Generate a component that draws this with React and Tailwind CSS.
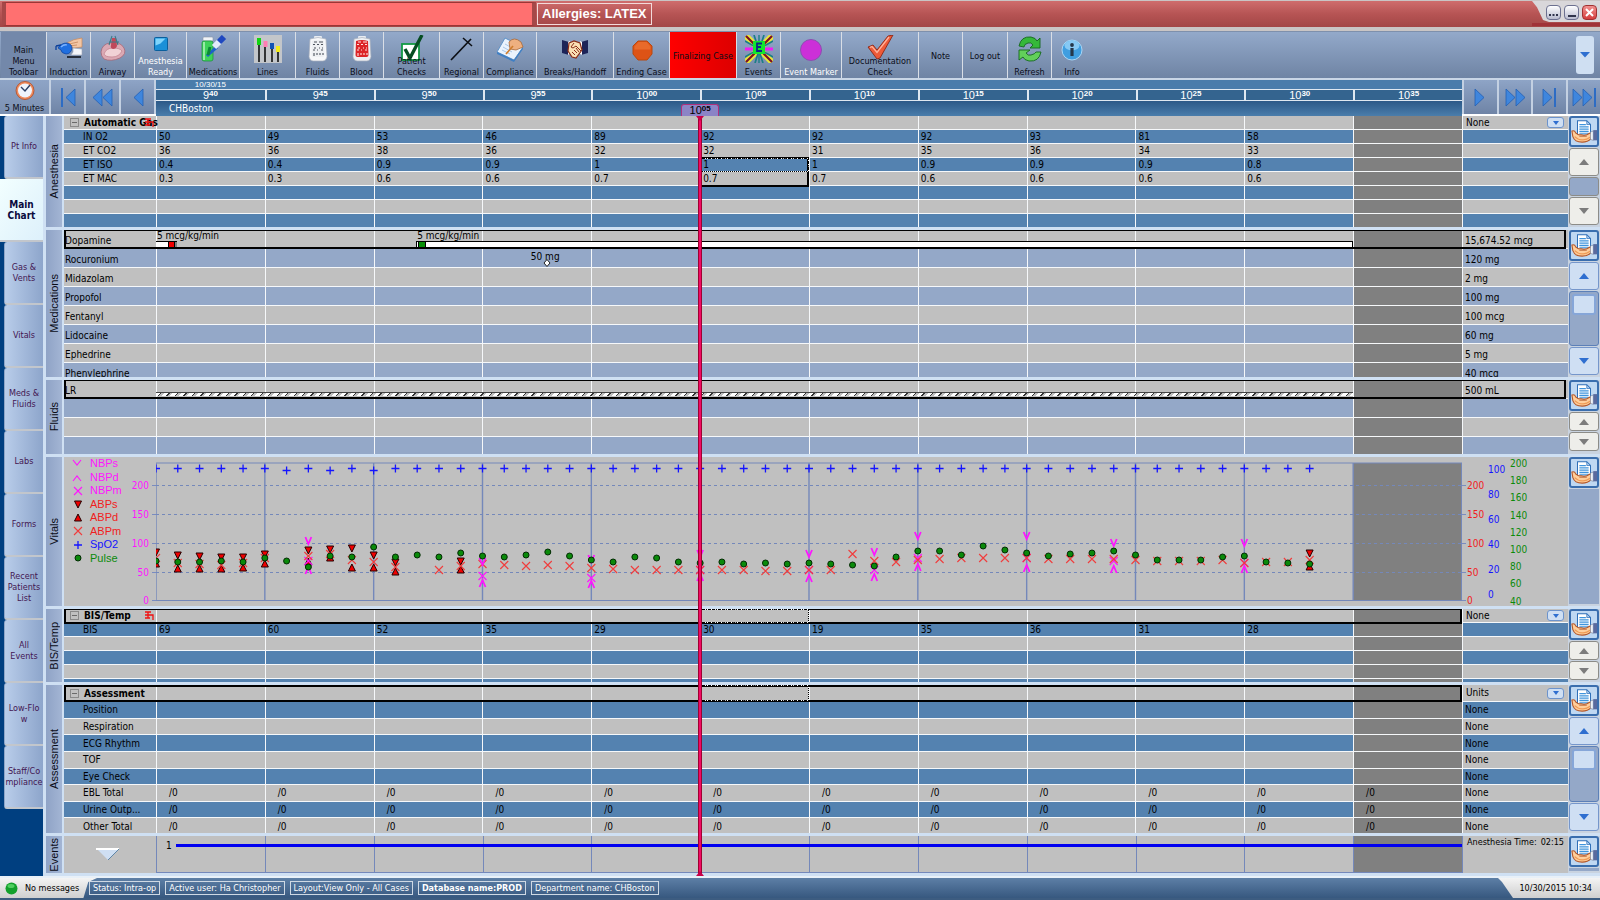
import React from "react";

const cond = "font-['DejaVu_Sans_Condensed','DejaVu_Sans',sans-serif]";

/* ---------- toolbar icons ---------- */
const Ico = ({ children, w = 28, h = 28 }) => (
  <svg width={w} height={h} viewBox="0 0 28 28" aria-hidden="true">{children}</svg>
);

const Bag = ({ body, edge, ink }) => (
  <Ico>
    <rect x="10" y="1" width="8" height="3" rx="1" fill="#e8ecf2" />
    <path d="M6 4q8-3 16 0l1 18q-1 4-4 4H9q-3 0-4-4z" fill={edge} stroke="#a8afbc" strokeWidth=".7" />
    <path d="M8 6q6-2 12 0l.5 14q0 2-2 2H9.5q-2 0-2-2z" fill={body} />
    <path d="M10 7h3M15 7h4M9 9.500h2M13 9.500h2M17 9.500h2M10 13h2M15 13h1M18 13h1M9 15h2M13 15h1M17 15h2M10 18v3M13 18v2M16 18v2M19 18v2" stroke={ink} strokeWidth="1.100" />
  </Ico>
);

const icons = {
  induction: (
    <Ico>
      <path d="M12 8q6-4 15-5v9l-8 1-7-1z" fill="#f3c6a4" stroke="#c4865c" strokeWidth=".7" />
      <path d="M14 9l9-2M14 11l8-1" stroke="#c4865c" strokeWidth=".8" />
      <path d="M3 13q3-5 9-5 5 1 5 5-1 6-6 6-5-1-5-4z" fill="#1f6fe0" stroke="#0b3f9a" strokeWidth=".7" />
      <path d="M6 12q3-3 6-2" stroke="#7db4ff" fill="none" strokeWidth="1.300" />
      <path d="M1 11v4M1 11l5-1" stroke="#0b3f9a" strokeWidth="1.300" />
      <path d="M18 13l9 1v6H16l2-3z" fill="#f4f6fa" stroke="#9aa3b2" strokeWidth=".6" />
      <path d="M12 22h14" stroke="#10151d" strokeWidth="1.600" />
    </Ico>
  ),
  airway: (
    <Ico>
      <path d="M2 17q1-8 9-9 10-2 14 5 3 6-4 10-9 4-16 1-3-3-3-7z" fill="#dba9b4" stroke="#a66877" strokeWidth=".8" />
      <path d="M5 19q2-6 9-6 7 0 9 3-3 6-10 6-7 0-8-3z" fill="#f1d2d6" stroke="#c58592" strokeWidth=".8" />
      <path d="M13 3h4l1 8q-1 3-4 3-3-1-2-4z" fill="#c0485a" />
      <path d="M10 7h10M13 1l-3 9M16 1l3 9" stroke="#3e7b86" strokeWidth="1.100" />
    </Ico>
  ),
  ready: (
    <svg width="14" height="14" viewBox="0 0 14 14" aria-hidden="true" className="mt-[2px]">
      <rect x=".5" y=".5" width="13" height="13" rx="1" fill="#1a90d8" stroke="#0a5f9c" />
      <path d="M1.500 1.500h10l-5 5-5 2z" fill="#7fd4fb" />
    </svg>
  ),
  meds: (
    <Ico>
      <rect x="4" y="2" width="10" height="4" rx="1" fill="#f0f3f7" stroke="#8b96a6" strokeWidth=".6" />
      <rect x="3" y="6" width="11" height="20" rx="2" fill="#3fd25a" stroke="#1f9440" strokeWidth=".8" />
      <path d="M5 7v18" stroke="#b6f5c0" strokeWidth="1.500" />
      <path d="M8 21l3-3 7-6" stroke="#1c62c8" strokeWidth="3" />
      <path d="M9 20l2-8" stroke="#0a8a34" strokeWidth="3" />
      <path d="M15 12l6-6" stroke="#e2ecfb" strokeWidth="6" />
      <path d="M20 7l5-5" stroke="#1f48c0" strokeWidth="6" />
    </Ico>
  ),
  lines: (
    <Ico>
      <rect width="28" height="28" fill="#c3c6ca" />
      <path d="M5 9v18M11 11v16M18 14v13M24 16v11" stroke="#111" strokeWidth="1.600" />
      <path d="M3 3h4v7H3z" fill="#12d412" /><path d="M9.500 6h4v6h-4z" fill="#ff7eb2" />
      <path d="M16 8h4v6h-4z" fill="#1253b4" /><path d="M22 11h4v6h-4z" fill="#f4ec1c" />
    </Ico>
  ),
  fluids: <Bag body="#eef0f3" edge="#f7f8fa" ink="#4c525c" />,
  blood: <Bag body="#dc2428" edge="#eef0f4" ink="#ffe3e0" />,
  checks: (
    <Ico>
      <rect x="4" y="9" width="17" height="16" fill="#fff" stroke="#129a44" strokeWidth="1.800" />
      <path d="M7 14l5 9L24 0" fill="none" stroke="#064d22" strokeWidth="3.400" />
    </Ico>
  ),
  regional: (
    <Ico>
      <path d="M3 25L23 4" stroke="#0c0f14" strokeWidth="1.700" />
      <path d="M15 3l9 8" stroke="#0c0f14" strokeWidth="1.500" />
    </Ico>
  ),
  compliance: (
    <Ico>
      <path d="M9 3l18 9-9 13L1 17z" fill="#eaf3fd" stroke="#5f93c9" />
      <path d="M1 17l17 8 9-13v2l-9 13L1 19z" fill="#3f7fc4" />
      <path d="M9 9l9 5M7 12l9 5M6 15l8 4" stroke="#a9c6e6" />
      <path d="M13 7q5-6 12 0l2 5-7 3-6-1z" fill="#eeb080" stroke="#a8693a" strokeWidth=".8" />
      <path d="M10 19l7-8" stroke="#d07d2c" strokeWidth="1.600" />
    </Ico>
  ),
  breaks: (
    <Ico>
      <path d="M1 5l7 2v13l-7-2zM27 5l-7 2v13l7-2z" fill="#1d2458" />
      <path d="M7 7l2-1v13l-2 1zM19 6l2 1v13l-2-1z" fill="#fff" />
      <path d="M8 8l5-2 6 2 2 7-6 8-4-1-4-6z" fill="#f9dfb4" stroke="#8a2d18" strokeWidth="1.200" />
      <path d="M13 8l-3 4 2 1 3-2 5 5M11 17l3 3M13 15l3 3M15 13l3 4" stroke="#8a2d18" fill="none" />
    </Ico>
  ),
  ending: (
    <Ico>
      <path d="M10 6h9l5 5v8l-5 6h-9l-5-6v-8z" fill="#dd5316" stroke="#b8480f" />
      <path d="M10.500 7h8l4 4.500v3H6.500v-3z" fill="#e96a2a" />
    </Ico>
  ),
  events: (
    <Ico>
      <path d="M1 1l26 26M27 1L1 27" stroke="#e9e83a" strokeWidth="6" />
      <path d="M1 1l26 26M27 1L1 27" stroke="#7b0f24" strokeWidth="2.200" />
      <path d="M0 6l28 16M28 6L0 22M9 0l9 28M19 0L10 28" stroke="#1b7f86" strokeWidth="1.700" />
      <path d="M14 0v28" stroke="#1b7f86" strokeWidth="1.400" />
      <path d="M0 14h28" stroke="#f01ff0" strokeWidth="3" />
      <path d="M8 6h12v13H8z" fill="#12e82c" />
      <path d="M17 8.500h-5v7.500h5M12 12h4" stroke="#0d2a86" strokeWidth="1.800" fill="none" />
    </Ico>
  ),
  marker: <Ico><circle cx="14" cy="15" r="10.500" fill="#cc30d8" stroke="#8d4fb0" /></Ico>,
  doc: (
    <Ico>
      <path d="M2 12l5-2 4 5L22 1l5-1-13 23-3 1z" fill="#ee5a38" stroke="#8c2614" strokeWidth=".9" />
      <path d="M4 12.500l2-1 5 6L23 2" stroke="#ffb49c" fill="none" strokeWidth="1.300" />
    </Ico>
  ),
  refresh: (
    <Ico>
      <path d="M3 11Q5 1 15 2q5 1 6 4l3-3v10H14l3-3q-2-3-5-2-4 1-4 4z" fill="#35b83a" stroke="#14681d" strokeWidth=".9" />
      <path d="M25 17q-2 10-12 9-5-1-6-4l-4 3V15h11l-4 3q2 3 5 2 4-1 5-3z" fill="#62cf5a" stroke="#14681d" strokeWidth=".9" />
    </Ico>
  ),
  info: (
    <Ico>
      <circle cx="14" cy="15" r="10" fill="#3f9ee0" stroke="#a8d6f5" />
      <ellipse cx="14" cy="10.500" rx="7.500" ry="5" fill="#86c9f4" />
      <circle cx="14" cy="10" r="1.900" fill="#24374a" />
      <path d="M14 13v8" stroke="#24374a" strokeWidth="3.200" />
    </Ico>
  ),
};

const tools = [
  ["w-[46px] bg-[#7388aa]", null, ["Main", "Menu", "Toolbar"]],
  ["w-[44px]", "induction", ["Induction"]],
  ["w-[44px]", "airway", ["Airway"]],
  ["w-[52px] text-white", "ready", ["Anesthesia", "Ready"]],
  ["w-[53px]", "meds", ["Medications"]],
  ["w-[56px]", "lines", ["Lines"]],
  ["w-[44px]", "fluids", ["Fluids"]],
  ["w-[44px]", "blood", ["Blood"]],
  ["w-[56px]", "checks", ["Patient", "Checks"]],
  ["w-[44px]", "regional", ["Regional"]],
  ["w-[53px]", "compliance", ["Compliance"]],
  ["w-[77px]", "breaks", ["Breaks/Handoff"]],
  ["w-[56px]", "ending", ["Ending Case"]],
  ["w-[67px] bg-linear-to-r from-[#ff0000] to-[#dd0000]", null, ["Finalizing Case"]],
  ["w-[44px]", "events", ["Events"]],
  ["w-[61px] text-white", "marker", ["Event Marker"]],
  ["w-[77px]", "doc", ["Documentation", "Check"]],
  ["w-[44px]", null, ["Note"]],
  ["w-[45px]", null, ["Log out"]],
  ["w-[44px]", "refresh", ["Refresh"]],
  ["w-[40px] border-r-0", "info", ["Info"]],
];

function TitleBar() {
  return (
    <header className="flex h-[31px] flex-col border-t border-b-2 border-[#c9c5c5] bg-[#c9c5c5]">
      <div className="flex h-[26px] bg-linear-to-b from-[#cf6d6d] via-[#b65454] to-[#a34646] pl-[2px]">
        <div className="my-px w-[534px] border-x-4 border-y border-[#a54848] border-y-[#9b3636] bg-[#ff7070]" />
        <h1 className="my-[2px] ml-px border border-[#f3dada] px-[4px] font-['Liberation_Sans',sans-serif] text-[13px] leading-[20px] font-bold text-white">
          Allergies: LATEX
        </h1>
        <div className="ml-auto flex w-[68px] flex-col">
          <div className="flex h-[21px] items-start justify-end gap-[3px] bg-[#d9d7da] pt-[4px] pr-[3px] [clip-path:polygon(0_0,100%_0,100%_100%,17px_100%,11px_90%,5px_30%)]">
            <button aria-label="More" className="flex h-[15px] w-[15px] items-end justify-center rounded-sm border border-[#6c7090] bg-linear-to-b from-white to-[#b9bcd0] pb-[3px]">
              <svg width="9" height="2"><path d="M0 0h2v2H0zM3.500 0h2v2h-2zM7 0h2v2H7z" fill="#30344c" /></svg>
            </button>
            <button aria-label="Minimize" className="flex h-[15px] w-[15px] items-end justify-center rounded-sm border border-[#6c7090] bg-linear-to-b from-white to-[#b9bcd0] pb-[2px]">
              <span className="h-[2px] w-[8px] bg-[#30344c]" />
            </button>
            <button aria-label="Close" className="flex h-[15px] w-[15px] items-center justify-center rounded-sm border border-[#a03030] bg-linear-to-b from-[#f09090] to-[#d43c3c]">
              <svg width="9" height="9"><path d="M1 1l7 7M8 1L1 8" stroke="#fff" strokeWidth="2" /></svg>
            </button>
          </div>
          <div className="mt-px h-[3px] bg-[#a03238]" />
        </div>
      </div>
    </header>
  );
}

function Toolbar() {
  return (
    <nav aria-label="Main toolbar" className={`flex h-[47px] border-t border-[#7e90ac] bg-linear-to-b from-[#93a9ca] to-[#6f84a4] pl-px text-[9px] leading-[11px] text-[#0b0d18] ${cond}`}>
      {tools.map(([cls, icon, lines]) => (
        <button key={lines[0]} className={`grid h-full shrink-0 grid-cols-1 justify-items-center border-r border-[#d9dee6] pt-[3px] whitespace-nowrap ${cls}`}>
          {icon && <span className="col-start-1 row-start-1 self-start">{icons[icon]}</span>}
          <span className={`col-start-1 row-start-1 ${icon || lines.length > 1 ? "self-end" : "self-center"}`}>
            {lines.map((l) => <span key={l} className="block">{l}</span>)}
          </span>
        </button>
      ))}
      <button aria-label="More tools" className="my-[4px] mr-[6px] ml-auto flex w-[18px] items-center justify-center rounded-[3px] bg-[#cfdff2]">
        <svg width="10" height="6"><path d="M0 0h10L5 5.500z" fill="#2f6fd0" /></svg>
      </button>
    </nav>
  );
}

/* ---------- time navigation ---------- */
const navPaths = {
  first: ["M7 3v19", ["M20 4v17l-9-8.500z"]],
  back2: ["", ["M12 4v17l-9-8.500z", "M22 4v17l-9-8.500z"]],
  back: ["", ["M18 4v17l-9-8.500z"]],
  fwd: ["", ["M8 4v17l9-8.500z"]],
  fwd2: ["", ["M4 4v17l9-8.500z", "M14 4v17l9-8.500z"]],
  next: ["M19 3v19", ["M7 4v17l9-8.500z"]],
  last: ["M24 3v19", ["M2 4v17l9-8.500z", "M12 4v17l9-8.500z"]],
};
const NavButton = ({ kind, label }) => {
  const [bar, tris] = navPaths[kind];
  return (
    <button aria-label={label} className="flex flex-1 items-center justify-center border-r-2 border-[#c3d0e2] bg-linear-to-b from-[#8ea4c6] to-[#6f84a6] last:border-r-0">
      <svg width="26" height="25" viewBox="0 0 26 25">
        {bar && <path d={bar} stroke="#2d6cc4" strokeWidth="2" />}
        {tris.map((d) => <path key={d} d={d} fill="#3f86dd" stroke="#2360b4" strokeWidth=".8" />)}
      </svg>
    </button>
  );
};

const times = [["9", "40"], ["9", "45"], ["9", "50"], ["9", "55"], ["10", "00"], ["10", "05"], ["10", "10"], ["10", "15"], ["10", "20"], ["10", "25"], ["10", "30"], ["10", "35"]];

const Clock = ({ h, m }) => (
  <span className="inline-flex items-start leading-[11px]">
    <span className="text-[11px]">{h}</span>
    <span className="text-[8px] leading-[8px] font-bold">{m}</span>
  </span>
);

function TimeRow() {
  return (
    <div className={`flex h-[38px] border-t-2 border-b-2 border-t-[#c9d6e6] border-b-white bg-[#3f719f] ${cond}`}>
      <div className="flex w-[156px] border-r-2 border-[#c3d0e2]">
        <button className="flex w-[51px] flex-col items-center justify-between border-r-2 border-[#c3d0e2] bg-linear-to-b from-[#8ea4c6] to-[#7b90b1] text-[9px] leading-[11px] whitespace-nowrap text-[#0b0d18]">
          <svg width="20" height="21" viewBox="0 0 20 21">
            <circle cx="10" cy="10.500" r="9" fill="#f08a5c" stroke="#b04c24" strokeWidth=".8" />
            <circle cx="10" cy="10.500" r="7" fill="#eff4fc" />
            <path d="M6 7l4 4 5-6" stroke="#2b3f66" fill="none" strokeWidth="1.400" />
          </svg>
          5 Minutes
        </button>
        <NavButton kind="first" label="Start" />
        <NavButton kind="back2" label="Page back" />
        <NavButton kind="back" label="Back" />
      </div>
      <div className="flex flex-1 flex-col text-white">
        <div className="grid h-[9px] grid-cols-12 bg-[#4a7cab] text-center font-['Liberation_Sans',sans-serif] text-[8px] leading-[9px]"><span>10/30/15</span></div>
        <div className="grid h-[12px] grid-cols-12 border-y border-[#dfe8f1] bg-[#34648f] font-['Liberation_Sans',sans-serif]">
          {times.map(([h, m]) => (
            <div key={h + m} className="flex justify-center border-l-2 border-[#dfe8f1] first:border-l-0"><Clock h={h} m={m} /></div>
          ))}
        </div>
        <div className="relative flex-1 bg-linear-to-b from-[#2c5988] to-[#4a7dab] pl-[13px] text-[10px] leading-[15px]">
          CHBoston
          <div className="absolute bottom-0 left-[41.667%] flex h-[12px] w-[38px] -translate-x-1/2 items-center justify-center rounded-t-[3px] border border-b-0 border-[#b0307c] bg-[#8b84c6] font-['Liberation_Sans',sans-serif] text-black">
            <Clock h="10" m="05" />
          </div>
        </div>
      </div>
      <div className="flex w-[138px] border-l-2 border-[#c3d0e2]">
        <NavButton kind="fwd" label="Forward" />
        <NavButton kind="fwd2" label="Page forward" />
        <NavButton kind="next" label="Now" />
        <NavButton kind="last" label="End" />
      </div>
    </div>
  );
}

/* ---------- side tabs ---------- */
const tabs = [["Pt Info"], ["Main", "Chart"], ["Gas &", "Vents"], ["Vitals"], ["Meds &", "Fluids"], ["Labs"], ["Forms"], ["Recent", "Patients", "List"], ["All", "Events"], ["Low-Flo", "w"], ["Staff/Co", "mpliance"]];

function SideTabs() {
  return (
    <nav aria-label="Chart sections" className={`flex w-[43px] shrink-0 flex-col bg-[#003f80] leading-[11px] whitespace-nowrap ${cond}`}>
      {tabs.map((t) => {
        const on = t[0] === "Main";
        return (
          <button key={t[0]} className={`flex h-[63px] flex-col items-center justify-center border-b-2 border-[#c2c6cc] ${on ? "bg-linear-to-br from-[#f2ffff] to-[#ddf0fb] text-[10px] font-bold text-[#0a0a3c]" : "ml-[4px] rounded-l-[3px] border-l border-l-[#8da5c8] bg-linear-to-r from-[#b9cdea] to-[#8da5cb] text-[9px] text-[#431652]"}`}>
            {t.map((l) => <span key={l}>{l}</span>)}
          </button>
        );
      })}
    </nav>
  );
}

/* ---------- section frame ---------- */
const DocButton = () => (
  <button aria-label="Open section form" className="flex h-[31px] shrink-0 items-center justify-center rounded-[3px] border-2 border-[#3a6eae] bg-[#bfd8f2]">
    <svg width="28" height="27" viewBox="0 0 28 27">
      <path d="M7 2h10l4 4v12H7z" fill="#fff" stroke="#2f6fb8" strokeWidth="1.100" />
      <path d="M17 2v4h4z" fill="#a9cdf0" stroke="#2f6fb8" strokeWidth=".8" />
      <path d="M9 6h7M9 8.500h10M9 11h10M9 13.500h10M9 16h10" stroke="#3f94dc" strokeWidth="1.400" />
      <path d="M1 13q3-1 4 2l3 2h3q3 1 6 0 3-2 5-2v6q-4 4-10 4-8 0-10-6z" fill="#ffcf9c" stroke="#b4582a" strokeWidth="1.200" />
      <path d="M4 19q4 4 9 3.500 4 0 8-3" stroke="#f09a54" strokeWidth="1.300" fill="none" />
      <path d="M9 18.500h8" stroke="#b4582a" />
      <path d="M21 14l3-1v10l-3-1z" fill="#eef3fa" stroke="#6a7690" strokeWidth=".6" />
      <path d="M24 12h4v11h-4z" fill="#5a6a9e" />
    </svg>
  </button>
);
const Arrow = ({ up, blue, tall }) => (
  <button aria-label={up ? "Scroll up" : "Scroll down"} className={`flex shrink-0 items-center justify-center rounded-[3px] border ${tall ? "h-[28px]" : "h-[19px]"} ${blue ? "border-[#7596cb] bg-[#cfdff3]" : "border-[#8c8c88] bg-[#eeeeea]"}`}>
    <svg width="10" height="6"><path d={up ? "M0 6h10L5 0z" : "M0 0h10L5 6z"} fill={blue ? "#2f6fd0" : "#7c7c7c"} /></svg>
  </button>
);
const Thumb = () => (
  <div className="flex-1 rounded-[3px] border border-[#5c80b8] bg-[#94a8c8] p-[2px]">
    <div className="h-[21px] rounded-[3px] border-2 border-[#86a6d8] bg-[#cfdff3]" />
  </div>
);
const scrolls = {
  flat: <><Arrow up tall /><div className="flex-1 rounded-[3px] border border-[#8c8c88] bg-[#94a8c8]" /><Arrow tall /></>,
  thumb: <><Arrow up blue tall /><Thumb /><Arrow blue tall /></>,
  mini: <><Arrow up /><Arrow /></>,
  none: <div className="flex-1 bg-[#94a8c8]" />,
};

const Section = ({ name, height, scroll, children }) => (
  <section aria-label={name} className={`flex ${height}`}>
    <h2 className="flex w-[16px] shrink-0 items-center justify-center bg-linear-to-r from-[#8fa3c6] to-[#a3b5d4] font-['Liberation_Sans',sans-serif] text-[11px] leading-[16px] text-[#0b0d18]">
      <span className="rotate-180 [writing-mode:vertical-rl]">{name}</span>
    </h2>
    <div className="relative ml-[2px] min-w-0 flex-1 overflow-hidden bg-[#c0c0c0]">{children}</div>
    <div className="flex w-[32px] shrink-0 flex-col gap-px bg-[#c9d3e0] px-px pb-[2px]">
      <DocButton />
      {scrolls[scroll]}
    </div>
  </section>
);

const Cols = () => (
  <colgroup>
    <col className="w-[92px]" />
    {times.map((t) => <col key={t.join()} />)}
    <col className="w-[106px]" />
  </colgroup>
);
const tableCls = "w-full table-fixed border-separate border-spacing-0 text-left text-black";
const cellCls = "border-b border-l border-[#f6f8fa] p-0 font-normal whitespace-nowrap";
const rowFill = (i, blue) => (i % 2 ? blue : "bg-[#c0c0c0]");

const Faucet = () => (
  <svg className="absolute top-[2px] right-[2px]" width="10" height="9" viewBox="0 0 10 9" aria-hidden="true">
    <path d="M1 1h6M4 1v6M1 4h8v5M1 7h5" stroke="#f01010" fill="none" strokeWidth="1.300" />
  </svg>
);

function HeadRow({ title, unit, h, faucet }) {
  return (
    <tr className={`${h} bg-[#c0c0c0]`}>
      <th scope="col" className="relative border-b border-[#f6f8fa] p-0">
        <div className="flex items-center gap-[5px] pl-[6px]">
          <button aria-label={`Collapse ${title}`} className="flex h-[9px] w-[9px] shrink-0 items-center justify-center border border-[#8a8a8a]"><span className="h-px w-[5px] bg-[#6a6a6a]" /></button>
          <span className="text-[10px] font-bold whitespace-nowrap">{title}</span>
        </div>
        {faucet && <Faucet />}
      </th>
      {times.map((t, i) => <td key={t.join()} className={`${cellCls} ${i === 11 ? "bg-[#808080]" : ""}`} />)}
      <td className={cellCls}>
        <div className="flex items-center justify-between pr-[4px] pl-[3px]">
          <select aria-label={`${title} units`} className="w-[70px] appearance-none bg-transparent leading-[12px]"><option>{unit}</option></select>
          <span className="flex h-[11px] w-[17px] items-center justify-center rounded-[3px] border border-[#6c93cc] bg-[#cfdff3]">
            <svg width="6" height="4"><path d="M0 0h6L3 4z" fill="#2f6fd0" /></svg>
          </span>
        </div>
      </td>
    </tr>
  );
}

const DataRow = ({ i, label, values, unit, h, pad }) => (
  <tr className={`${h} leading-[12px] ${rowFill(i, "bg-[#5482b0]")}`}>
    <th scope="row" className="border-b border-[#f6f8fa] p-0 pt-px pl-[19px] font-normal whitespace-nowrap">{label}</th>
    {times.map((t, c) => (
      <td key={t.join()} className={`${cellCls} pt-px ${pad} ${c === 11 ? "bg-[#808080]" : ""}`}>{values?.[c]}</td>
    ))}
    <td className={`${cellCls} pt-px pl-[2px]`}>{unit}</td>
  </tr>
);

const gas = [
  ["IN O2", [50, 49, 53, 46, 89, 92, 92, 92, 93, 81, 58]],
  ["ET CO2", [36, 36, 38, 36, 32, 32, 31, 35, 36, 34, 33]],
  ["ET ISO", ["0.4", "0.4", "0.9", "0.9", "1", "1", "1", "0.9", "0.9", "0.9", "0.8"]],
  ["ET MAC", [0.3, 0.3, 0.6, 0.6, 0.7, 0.7, 0.7, 0.6, 0.6, 0.6, 0.6]],
  [""], [""], [""],
];
const zeros = times.map(() => "/0");
const assess = [["Position"], ["Respiration"], ["ECG Rhythm"], ["TOF"], ["Eye Check"], ["EBL Total", zeros], ["Urine Outp...", zeros], ["Other Total", zeros]];
const drugs = [["Dopamine", "15,674.52 mcg"], ["Rocuronium", "120 mg"], ["Midazolam", "2 mg"], ["Propofol", "100 mg"], ["Fentanyl", "100 mcg"], ["Lidocaine", "60 mg"], ["Ephedrine", "5 mg"], ["Phenylephrine", "40 mcg"]];

const Overlay = ({ children }) => (
  <div className="pointer-events-none absolute inset-y-0 right-[106px] left-[92px]">{children}</div>
);
const DashedCell = ({ cls }) => (
  <div className={`absolute left-[41.667%] w-[8.333%] border border-dashed border-white outline-1 -outline-offset-1 outline-dotted outline-black ${cls}`} />
);

const PlainTable = ({ rows }) => (
  <table className={`${tableCls} text-[10px] leading-[15px]`}>
    <Cols />
    <tbody>
      {rows.map(([label, total], i) => (
        <tr key={label + i} className={`h-[19px] ${rowFill(i, "bg-[#94a8c8]")}`}>
          <th scope="row" className="border-b border-[#f6f8fa] p-0 pt-[3px] pl-px font-normal whitespace-nowrap">{label}</th>
          {times.map((t, c) => <td key={t.join()} className={`${cellCls} ${c === 11 ? "bg-[#808080]" : ""}`} />)}
          <td className={`${cellCls} pt-[3px] pl-[2px]`}>{total}</td>
        </tr>
      ))}
    </tbody>
  </table>
);

/* ---------- vitals plot; y is in pixels from the top of the panel ---------- */
const pulse = [104, 105, 105, 104, 105, 101, 104, 110, 99, 100, 90, 100, 98, 100, 96, 99, 100, 98, 95, 99, 103, 105, 100, 101, 105, 106, 105, 107, 106, 107, 106, 107, 108, 109, 100, 94, 94, 98, 89, 93, 96, 99, 97, 96, 94, 98, 103, 103, 103, 100, 99, 105, 106, 107];
const abpm = { 0: 101, 1: 106, 2: 107, 3: 108, 4: 106, 5: 101, 7: 99, 8: 97, 9: 103, 10: 105, 11: 110, 13: 113, 14: 109, 15: 107, 16: 108, 17: 109, 18: 108, 19: 109, 20: 111, 21: 112, 22: 113, 23: 113, 24: 113, 25: 113, 26: 113, 27: 113, 28: 114, 29: 114, 30: 113, 31: 113, 32: 97, 33: 104, 34: 105, 35: 103, 36: 102, 37: 101, 38: 101, 39: 101, 40: 101, 41: 102, 42: 102, 43: 102, 44: 102, 45: 103, 46: 104, 47: 104, 48: 104, 49: 103, 50: 106, 51: 105, 52: 105, 53: 103 };
const abps = { 0: 95, 1: 98, 2: 99, 3: 100, 4: 100, 5: 97, 7: 93, 8: 92, 9: 91, 10: 98, 11: 105, 14: 104, 53: 96 };
const abpd = { 0: 107, 1: 112, 2: 112, 3: 112, 4: 111, 5: 107, 7: 105, 8: 101, 9: 111, 10: 111, 11: 115, 14: 113, 53: 110 };
const nbps = { 7: 84, 15: 105, 20: 102, 25: 97, 30: 97, 33: 95, 35: 79, 40: 79, 44: 86, 50: 86 };
const nbpd = { 7: 113, 15: 126, 20: 127, 25: 120, 30: 121, 33: 120, 35: 110, 40: 111, 44: 112, 50: 112 };
const nbpm = { 7: 104, 15: 119, 20: 121, 25: 113, 30: 113, 33: 113, 35: 101, 40: 101, 44: 104, 50: 106 };

const marks = {
  plus: <path d="M-4 0h8M0-4v8" stroke="#1414ff" strokeWidth="1.300" />,
  abpm: <path d="M-4-4l8 8M4-4l-8 8" stroke="#f03c3c" strokeWidth="1.100" />,
  nbpm: <path d="M-4-4l8 8M4-4l-8 8" stroke="#ff14ff" strokeWidth="1.100" />,
  abps: <path d="M-3.500-3h7L0 4z" fill="#f00000" stroke="#200" />,
  abpd: <path d="M-3.500 3h7L0-4z" fill="#f00000" stroke="#200" />,
  nbps: <path d="M-3-4L0 3l3-7" fill="none" stroke="#ff14ff" strokeWidth="1.800" />,
  nbpd: <path d="M-3 4L0-3l3 7" fill="none" stroke="#ff14ff" strokeWidth="1.800" />,
  nbpsThin: <path d="M-5-4l4 5 4-5" fill="none" stroke="#ff14ff" strokeWidth="1.100" />,
  nbpdThin: <path d="M-5 4l4-5 4 5" fill="none" stroke="#ff14ff" strokeWidth="1.100" />,
  pulse: <circle r="3" fill="#0a8a0a" stroke="#032a03" />,
};
const Mark = ({ i, y, kind }) => (
  <svg x={`${(i * 100) / 60}%`} y={y} overflow="visible">{marks[kind]}</svg>
);
const Series = ({ data, kind }) => Object.entries(data).map(([i, y]) => <Mark key={i} i={+i} y={y} kind={kind} />);

const legend = [["NBPs", "nbpsThin", "text-[#ff14ff]"], ["NBPd", "nbpdThin", "text-[#ff14ff]"], ["NBPm", "nbpm", "text-[#ff14ff]"], ["ABPs", "abps", "text-[#f02020]"], ["ABPd", "abpd", "text-[#f02020]"], ["ABPm", "abpm", "text-[#f02020]"], ["SpO2", "plus", "text-[#1414ff]"], ["Pulse", "pulse", "text-[#0a8a0a]"]];

function Vitals() {
  const levels = [[200, 28], [150, 57], [100, 86], [50, 115], [0, 143]];
  return (
    <div className="flex h-full">
      <div className="flex w-[92px] justify-between">
        <ul className="pl-[7px] font-['Liberation_Sans',sans-serif] text-[11px]">
          {legend.map(([t, k, c], n) => (
            <li key={t} className={`flex items-center gap-[6px] leading-[13px] ${n % 2 ? "h-[14px]" : "h-[13px]"} ${c}`}>
              <svg width="13" height="10" viewBox="-7 -5 13 10">{marks[k]}</svg>{t}
            </li>
          ))}
        </ul>
        <svg width="34" height="149" className="text-[10px]">
          {levels.map(([v, y]) => (
            <g key={v}>
              <text x="27" y={y + 4} textAnchor="end" fill="#ff14ff">{v}</text>
              <path d={`M30 ${y + 0.5}h4`} stroke="#7a8cc0" />
            </g>
          ))}
        </svg>
      </div>
      <svg className="h-[149px] min-w-0 flex-1">
        <rect x="91.667%" y="6" width="8.333%" height="137" fill="#808080" />
        {times.map((t, c) => <line key={t.join()} x1={`${(c * 100) / 12}%`} x2={`${(c * 100) / 12}%`} y1="6" y2="143" stroke="#7488ba" strokeWidth="1.400" />)}
        <line x1="0" x2="100%" y1="6" y2="6" stroke="#7488ba" />
        <line x1="0" x2="100%" y1="143.500" y2="143.500" stroke="#7488ba" />
        <line x1="100%" x2="100%" y1="6" y2="143" stroke="#7488ba" strokeWidth="2" />
        {levels.slice(0, 4).map(([v, y]) => <line key={v} x1="0" x2="100%" y1={y + 0.5} y2={y + 0.5} stroke="#7488ba" strokeDasharray="3 3" />)}
        {pulse.map((_, i) => <Mark key={i} i={i} y={[6, 8, 10].includes(i) ? 13.5 : 11.5} kind="plus" />)}
        <Series data={abps} kind="abps" />
        <Series data={abpd} kind="abpd" />
        <Series data={nbpm} kind="nbpm" />
        <Series data={abpm} kind="abpm" />
        <Series data={nbps} kind="nbps" />
        <Series data={nbpd} kind="nbpd" />
        <Series data={pulse} kind="pulse" />
      </svg>
      <svg width="106" height="149" className="text-[10px]">
        {levels.map(([v, y]) => (
          <g key={v}>
            <path d={`M0 ${y + 0.5}h4`} stroke="#7a8cc0" />
            <text x="5" y={y + 4} fill="#f02020">{v}</text>
          </g>
        ))}
        {[100, 80, 60, 40, 20, 0].map((v, n) => <text key={v} x="26" y={16 + n * 25} fill="#1414ff">{v}</text>)}
        {[200, 180, 160, 140, 120, 100, 80, 60, 40].map((v, n) => <text key={v} x="48" y={10 + Math.round(n * 17.2)} fill="#0a8a0a">{v}</text>)}
      </svg>
    </div>
  );
}

function Events() {
  return (
    <div className="flex h-full">
      <button aria-label="Expand events" className="flex w-[92px] items-center justify-center pr-[4px]">
        <svg width="24" height="13"><path d="M1 1h22L12 12z" fill="#cfdff3" /><path d="M0 1h23" stroke="#fff" strokeWidth="2" /><path d="M23 1L12 12" stroke="#5f86a8" /></svg>
      </button>
      <div className="relative grid flex-1 grid-cols-12 border-b border-[#7488ba]">
        {times.map((t, c) => <div key={t.join()} className={`border-l border-[#7488ba] ${c === 11 ? "bg-[#808080]" : ""}`} />)}
        <div className="absolute inset-x-0 top-[3px] flex items-center pl-[10px] text-[10px] leading-[13px]">
          1<span className="ml-[4px] h-[3px] flex-1 bg-[#0000f0]" />
        </div>
      </div>
      <div className="flex w-[106px] justify-between border-l border-[#7488ba] pr-[4px] pl-[4px] text-[9px] leading-[12px] whitespace-nowrap">
        <span>Anesthesia Time:</span><span>02:15</span>
      </div>
    </div>
  );
}

function StatusBar() {
  const chip = "border border-[#cfd9e4] px-[3px]";
  return (
    <footer className={`flex h-[24px] items-stretch border-t-2 border-b-2 border-t-[#e8f0f8] border-b-[#3d5c80] bg-linear-to-b from-[#5d7fa6] to-[#37587f] text-[9px] leading-[12px] whitespace-nowrap text-white ${cond}`}>
      <div className="flex w-[97px] items-center gap-[7px] bg-linear-to-b from-[#f4f4f4] to-[#cfcfcf] pl-[5px] text-black [clip-path:polygon(0_0,100%_0,91%_20%,86%_100%,0_100%)]">
        <svg width="13" height="13"><circle cx="6.500" cy="6.500" r="6" fill="#12a02c" /><ellipse cx="6" cy="4" rx="3.500" ry="2" fill="#4fcf60" /></svg>
        No messages
      </div>
      <div className="-ml-[8px] flex items-center gap-[5px]">
        <span className={chip}>Status: Intra-op</span>
        <span className={chip}>Active user: Ha Christopher</span>
        <span className={chip}>Layout:View Only - All Cases</span>
        <span className={`${chip} font-bold`}>Database name:PROD</span>
        <span className={chip}>Department name: CHBoston</span>
      </div>
      <div className="ml-auto flex w-[102px] items-center justify-end bg-linear-to-b from-[#f4f4f4] to-[#cfcfcf] pr-[8px] text-black [clip-path:polygon(0_0,100%_0,100%_100%,15px_100%,4px_20%)]">
        10/30/2015 10:34
      </div>
    </footer>
  );
}

export default function App() {
  return (
    <div className="flex min-h-screen flex-col bg-[#cfe0f3]">
      <TitleBar />
      <Toolbar />
      <TimeRow />
      <main className="flex flex-1">
        <SideTabs />
        <div className={`relative flex min-w-0 flex-1 flex-col gap-[3px] bg-[#cfe0f3] pb-[3px] pl-[3px] text-[10px] leading-[13px] ${cond}`}>
          <Section name="Anesthesia" height="h-[111px]" scroll="flat">
            <table className={tableCls}>
              <Cols />
              <thead><HeadRow title="Automatic Gas" unit="None" h="h-[14px]" faucet /></thead>
              <tbody>{gas.map(([l, v], i) => <DataRow key={i} i={i + 1} label={l} values={v} h="h-[14px]" pad="pl-[2px]" />)}</tbody>
            </table>
            <Overlay>
              <div className="absolute top-[41px] left-[41.667%] h-[30px] w-[8.333%] border-2 border-black" />
              <DashedCell cls="top-[42px] h-[14px]" />
            </Overlay>
          </Section>
          <Section name="Medications" height="h-[147px]" scroll="thumb">
            <PlainTable rows={drugs} />
            <div className="pointer-events-none absolute top-0 right-[2px] left-0 h-[19px] border-2 border-t border-black" />
            <Overlay>
              <span className="absolute top-0 left-px leading-[12px]">5 mcg/kg/min</span>
              <span className="absolute top-0 left-[20%] leading-[12px]">5 mcg/kg/min</span>
              <div className="absolute top-[11px] left-0 flex h-[7px] w-[21px] border-y border-black bg-white">
                <span className="ml-[12px] w-[7px] border-x border-black bg-[#f00000]" /><span className="flex-1 bg-[#808080]" />
              </div>
              <div className="absolute top-[11px] right-[8.333%] left-[19.900%] flex h-[7px] border border-black bg-white">
                <span className="ml-px w-[8px] border-x border-black bg-[#089008]" />
              </div>
              <span className="absolute top-[21px] left-[28.700%] leading-[12px]">50 mg</span>
              <svg className="absolute top-[29px] left-[29.600%]" width="8" height="8"><path d="M4 .5L7 4 4 7.500 1 4z" fill="#fff" stroke="#222" /></svg>
            </Overlay>
          </Section>
          <Section name="Fluids" height="h-[74px]" scroll="mini">
            <PlainTable rows={[["LR", "500 mL"], ["", ""], ["", ""], ["", ""]]} />
            <div className="pointer-events-none absolute top-0 right-[2px] left-0 h-[19px] border-2 border-t border-black" />
            <Overlay>
              <div className="absolute top-[12px] right-[8.333%] left-0 h-[4px] border-t border-[#444] bg-[repeating-linear-gradient(135deg,#fff_0_3px,#333_3px_4px,#c0c0c0_4px_6px)]" />
            </Overlay>
          </Section>
          <Section name="Vitals" height="h-[149px]" scroll="none"><Vitals /></Section>
          <Section name="BIS/Temp" height="h-[73px]" scroll="mini">
            <table className={tableCls}>
              <Cols />
              <thead><HeadRow title="BIS/Temp" unit="None" h="h-[14px]" faucet /></thead>
              <tbody>
                <DataRow i={1} label="BIS" values={[69, 60, 52, 35, 29, 30, 19, 35, 36, 31, 28]} h="h-[14px]" pad="pl-[2px]" />
                {[2, 3, 4, 5].map((i) => <DataRow key={i} i={i} label="" h="h-[14px]" pad="" />)}
              </tbody>
            </table>
            <div className="pointer-events-none absolute top-0 right-[106px] left-0 h-[15px] border-2 border-t border-black" />
            <Overlay><DashedCell cls="top-0 h-[14px]" /></Overlay>
          </Section>
          <Section name="Assessment" height="h-[148px]" scroll="thumb">
            <table className={`${tableCls} h-[150px]`}>
              <Cols />
              <thead><HeadRow title="Assessment" unit="Units" h="h-[17px]" /></thead>
              <tbody>{assess.map(([l, v], i) => <DataRow key={l} i={i + 1} label={l} values={v} unit="None" h="" pad="pl-[12px]" />)}</tbody>
            </table>
            <div className="pointer-events-none absolute top-0 right-[106px] left-0 h-[17px] border-2 border-black" />
            <Overlay><DashedCell cls="top-0 h-[16px]" /></Overlay>
          </Section>
          <Section name="Events" height="flex-1 min-h-[37px]" scroll="none"><Events /></Section>
          <div className="pointer-events-none absolute inset-y-0 right-[138px] left-[113px]">
            <div className="absolute inset-y-0 left-[41.667%] w-[4px] -translate-x-1/2 border-x border-[#a00030] bg-[#f00a64]" />
            <svg className="absolute top-0 left-[41.667%] -translate-x-1/2" width="8" height="5"><path d="M0 0h8L4 5z" fill="#c80048" /></svg>
            <svg className="absolute bottom-0 left-[41.667%] -translate-x-1/2" width="8" height="5"><path d="M0 5h8L4 0z" fill="#c80048" /></svg>
          </div>
        </div>
      </main>
      <StatusBar />
    </div>
  );
}
